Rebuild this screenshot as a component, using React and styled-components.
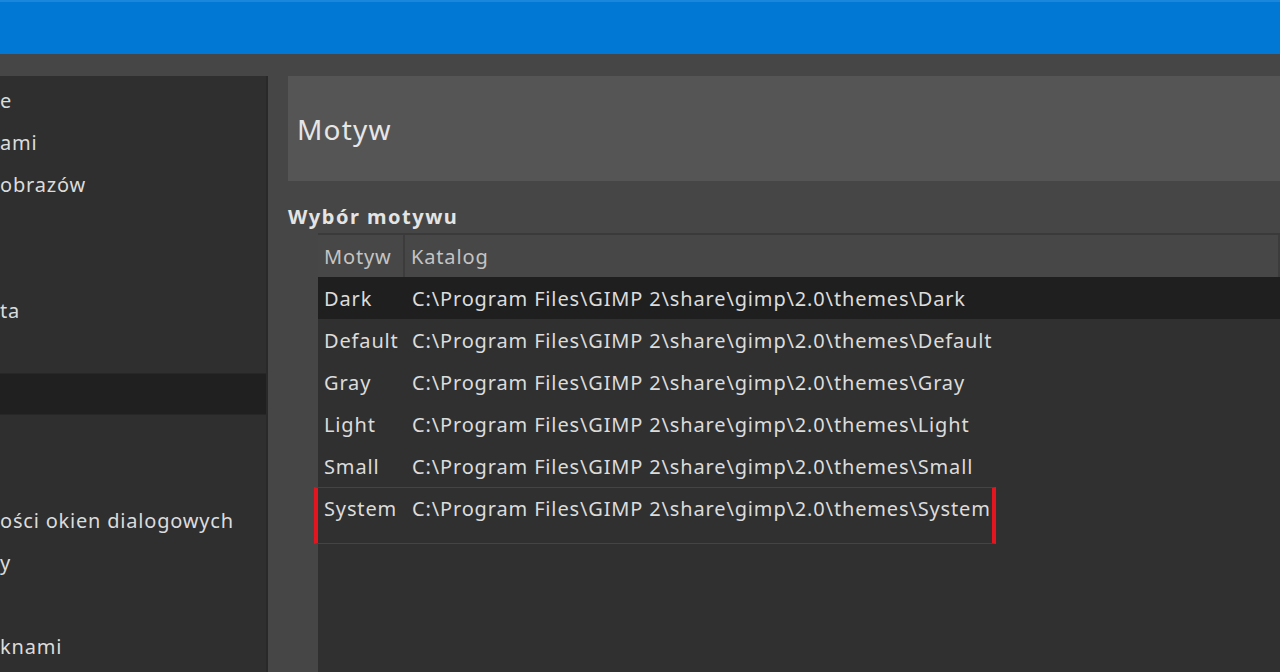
import React from "react";
import styled, { createGlobalStyle } from "styled-components";

const GlobalStyle = createGlobalStyle`
  html, body {
    margin: 0;
    padding: 0;
    background: #464646;
    overflow: hidden;
  }
  * {
    box-sizing: border-box;
  }
`;

const Page = styled.div`
  width: 1280px;
  height: 672px;
  display: flex;
  flex-direction: column;
  font-family: "Noto Sans", "Open Sans", sans-serif;
  color: #dcdcdc;
`;

const TitleBar = styled.div`
  height: 54px;
  flex-shrink: 0;
  background: #0078d4;
  border-top: 2px solid #1a86dc;
`;

const Body = styled.div`
  flex: 1;
  display: flex;
  padding-top: 22px;
  min-height: 0;
`;

const Sidebar = styled.div`
  width: 268px;
  flex-shrink: 0;
  background: #2f2f2f;
  border-right: 2px solid #292929;
  padding-top: 3px;
  overflow: hidden;
`;

const NavItem = styled.div`
  height: 42px;
  display: flex;
  align-items: center;
  font-size: 20px;
  letter-spacing: 0.8px;
  white-space: nowrap;
  background: ${({ selected }) => (selected ? "#202020" : "transparent")};
  border-top: 1px solid ${({ selected }) => (selected ? "#272727" : "transparent")};
  border-bottom: 1px solid ${({ selected }) => (selected ? "#272727" : "transparent")};
`;

const Main = styled.div`
  flex: 1;
  margin-left: 20px;
  display: flex;
  flex-direction: column;
  min-width: 0;
`;

const PageHeader = styled.div`
  height: 105px;
  flex-shrink: 0;
  background: #555555;
  display: flex;
  align-items: center;
  padding-left: 9px;
  font-size: 28px;
  letter-spacing: 1.2px;
  color: #e6e6e6;
`;

const SectionTitle = styled.div`
  height: 52px;
  display: flex;
  align-items: flex-end;
  padding-bottom: 3px;
  font-size: 20px;
  font-weight: 700;
  letter-spacing: 1.5px;
  color: #e4e4e4;
`;

const TableBox = styled.div`
  flex: 1;
  margin-left: 30px;
  background: #303030;
  border-top: 2px solid #3a3a3a;
  display: flex;
  flex-direction: column;
`;

const Row = styled.div`
  position: relative;
  height: 42px;
  display: grid;
  grid-template-columns: 87px 1fr;
  align-items: center;
  font-size: 20px;
  letter-spacing: 0.85px;
  white-space: nowrap;
  background: ${({ selected }) => (selected ? "#1f1f1f" : "transparent")};
`;

const HeadCell = styled.div`
  height: 100%;
  display: flex;
  align-items: center;
  padding-left: 6px;
  background: #474747;
  color: #c4c4c4;
  border-right: 2px solid #3c3c3c;
`;

const Cell = styled.div`
  padding-left: ${({ first }) => (first ? 6 : 7)}px;
`;

const Focus = styled.div`
  position: absolute;
  left: -4px;
  top: 0;
  width: 682px;
  height: 57px;
  border-left: 4px solid #e3151f;
  border-right: 4px solid #e3151f;
  border-top: 1px solid #7e2a30;
  border-bottom: 1px solid #7e2a30;
  pointer-events: none;
`;

const navItems = [
  { text: "e" },
  { text: "ami" },
  { text: "obrazów" },
  { text: "" },
  { text: "" },
  { text: "ta" },
  { text: "" },
  { text: "", selected: true },
  { text: "" },
  { text: "" },
  { text: "ości okien dialogowych" },
  { text: "y" },
  { text: "" },
  { text: "knami" },
];

const base = "C:\\Program Files\\GIMP 2\\share\\gimp\\2.0\\themes\\";
const themes = ["Dark", "Default", "Gray", "Light", "Small", "System"];

export default function App() {
  return (
    <Page>
      <GlobalStyle />
      <TitleBar />
      <Body>
        <Sidebar>
          {navItems.map((item, i) => (
            <NavItem key={i} selected={item.selected}>
              {item.text}
            </NavItem>
          ))}
        </Sidebar>
        <Main>
          <PageHeader>Motyw</PageHeader>
          <SectionTitle>Wybór motywu</SectionTitle>
          <TableBox>
            <Row>
              <HeadCell>Motyw</HeadCell>
              <HeadCell>Katalog</HeadCell>
            </Row>
            {themes.map((name) => (
              <Row key={name} selected={name === "Dark"}>
                <Cell first>{name}</Cell>
                <Cell>{base + name}</Cell>
                {name === "System" && <Focus />}
              </Row>
            ))}
          </TableBox>
        </Main>
      </Body>
    </Page>
  );
}
